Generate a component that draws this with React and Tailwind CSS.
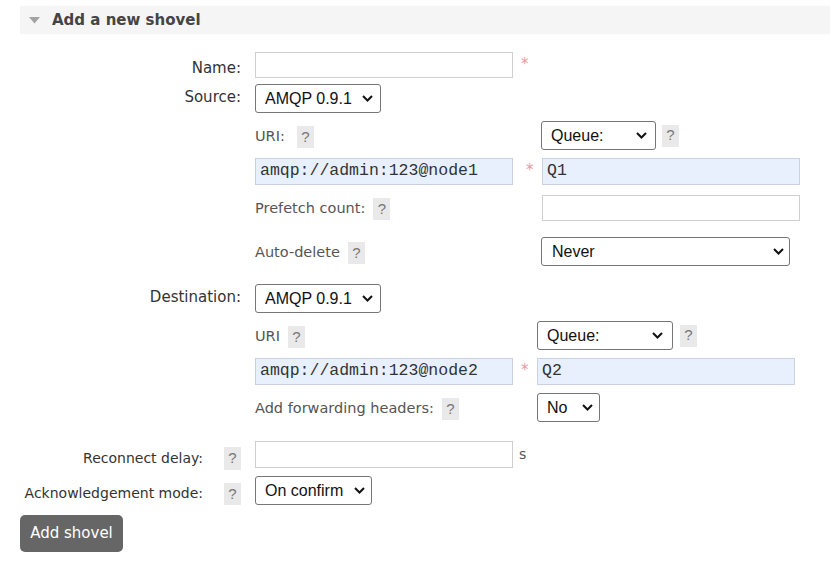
import React from "react";

const sans = "font-['DejaVu_Sans',Verdana,sans-serif]";
const arial = "font-['Liberation_Sans',Arial,sans-serif]";
const mono = "font-['Liberation_Mono','Courier_New',monospace]";

function Chevron() {
  return (
    <svg width="11" height="7" viewBox="0 0 11 7" className="shrink-0">
      <path d="M1 1 L5.5 5.5 L10 1" fill="none" stroke="#111" strokeWidth="2" />
    </svg>
  );
}

function Select({ text, w, h = "h-[29px]", pl = "pl-[9px]", pr = "pr-[8px]" }) {
  return (
    <div
      className={`${w} ${h} ${pl} ${pr} ${arial} flex items-center justify-between rounded-[3px] border border-[#767676] bg-white text-[16px] text-[#111] shrink-0`}
    >
      <span>{text}</span>
      <Chevron />
    </div>
  );
}

function Help({ cls = "" }) {
  return (
    <span
      className={`${arial} inline-flex h-[22px] w-[17px] shrink-0 items-center justify-center bg-[#e9e9e9] text-[15px] text-[#777] ${cls}`}
    >
      ?
    </span>
  );
}

function Star({ cls = "" }) {
  return <span className={`${sans} text-[15px] text-[#e39aa5] ${cls}`}>*</span>;
}

function TextInput({ w = "w-[258px]", h = "h-[27px]", value, filled }) {
  return (
    <div
      className={`${w} ${h} shrink-0 flex items-center pl-[4px] border ${
        filled ? "bg-[#e8f0fe] border-[#c9d2de]" : "bg-white border-[#cfcfcf]"
      } ${mono} text-[16.5px] text-[#333]`}
    >
      {value}
    </div>
  );
}

function SubLabel({ children }) {
  return <span className={`${sans} text-[14.5px] text-[#555]`}>{children}</span>;
}

export default function App() {
  return (
    <div className="w-[830px] h-[582px] bg-white overflow-hidden pl-[20px] pt-[6px]">
      {/* header */}
      <div className="flex h-[28px] items-center bg-[#f5f5f5] pl-[9px]">
        <svg width="11" height="7" viewBox="0 0 11 7">
          <path d="M0 0 L11 0 L5.5 6.5 Z" fill="#a3a3a3" />
        </svg>
        <span className={`${sans} ml-[12px] mt-[1px] text-[15px] font-bold text-[#444]`}>Add a new shovel</span>
      </div>

      <div className={`${sans} mt-[18px]`}>
        {/* Name */}
        <div className="flex items-start">
          <div className="w-[221px] pt-[7px] text-right text-[15px] leading-[18px] text-[#333]">Name:</div>
          <div className="ml-[14px] flex items-start">
            <TextInput h="h-[26px]" />
            <Star cls="ml-[8px] mt-[1px]" />
          </div>
        </div>

        {/* Source */}
        <div className="mt-[6px] flex items-start">
          <div className="w-[221px] pt-[4px] text-right text-[15px] leading-[18px] text-[#333]">Source:</div>
          <div className="ml-[14px]">
            <Select text="AMQP 0.9.1" w="w-[126px]" pl="pl-[9px]" pr="pr-[7px]" />
            <div className="mt-[8px]">
              <div className="flex h-[29px]">
                <div className="flex w-[286px] items-center pt-[3px]">
                  <SubLabel>URI:</SubLabel>
                  <Help cls="ml-[12px]" />
                </div>
                <div className="flex items-center">
                  <Select text="Queue:" w="w-[115px]" pl="pl-[9px]" pr="pr-[8px]" />
                  <Help cls="ml-[6px]" />
                </div>
              </div>
              <div className="mt-[8px] flex">
                <div className="flex w-[287px] items-start">
                  <TextInput value="amqp://admin:123@node1" filled />
                  <Star cls="ml-[13px] mt-[1px]" />
                </div>
                <TextInput value="Q1" filled />
              </div>
              <div className="mt-[10px] flex h-[26px]">
                <div className="flex w-[287px] items-center pt-[2px]">
                  <SubLabel>Prefetch count:</SubLabel>
                  <Help cls="ml-[8px]" />
                </div>
                <TextInput h="h-[26px]" />
              </div>
              <div className="mt-[16px] flex h-[29px]">
                <div className="flex w-[286px] items-center pt-[3px]">
                  <SubLabel>Auto-delete</SubLabel>
                  <Help cls="ml-[8px]" />
                </div>
                <Select text="Never" w="w-[249px]" pl="pl-[10px]" pr="pr-[5px]" />
              </div>
            </div>
          </div>
        </div>

        {/* Destination */}
        <div className="mt-[18px] flex items-start">
          <div className="w-[221px] pt-[4px] text-right text-[15px] leading-[18px] text-[#333]">Destination:</div>
          <div className="ml-[14px]">
            <Select text="AMQP 0.9.1" w="w-[126px]" pl="pl-[9px]" pr="pr-[7px]" />
            <div className="mt-[8px]">
              <div className="flex h-[29px]">
                <div className="flex w-[282px] items-center pt-[3px]">
                  <SubLabel>URI</SubLabel>
                  <Help cls="ml-[8px]" />
                </div>
                <div className="flex items-center">
                  <Select text="Queue:" w="w-[136px]" pl="pl-[9px]" pr="pr-[9px]" />
                  <Help cls="ml-[7px]" />
                </div>
              </div>
              <div className="mt-[8px] flex">
                <div className="flex w-[282px] items-start">
                  <TextInput value="amqp://admin:123@node2" filled />
                  <Star cls="ml-[8px] mt-[1px]" />
                </div>
                <TextInput value="Q2" filled />
              </div>
              <div className="mt-[8px] flex h-[29px]">
                <div className="flex w-[282px] items-center pt-[3px]">
                  <SubLabel>Add forwarding headers:</SubLabel>
                  <Help cls="ml-[8px]" />
                </div>
                <Select text="No" w="w-[63px]" pl="pl-[9px]" pr="pr-[6px]" />
              </div>
            </div>
          </div>
        </div>

        {/* Reconnect delay */}
        <div className="mt-[19px] flex items-start">
          <div className="flex w-[221px] items-start justify-end pt-[6px]">
            <span className="pt-[2px] text-[14px] leading-[18px] text-[#333]">Reconnect delay:</span>
            <Help cls="ml-[21px] h-[23px]" />
          </div>
          <div className="ml-[14px] flex items-center">
            <TextInput />
            <span className="ml-[6px] text-[14px] text-[#555]">s</span>
          </div>
        </div>

        {/* Acknowledgement mode */}
        <div className="mt-[6px] flex items-start">
          <div className="flex w-[221px] items-start justify-end pt-[7px]">
            <span className="pt-[1px] text-[14px] leading-[18px] text-[#333]">Acknowledgement mode:</span>
            <Help cls="ml-[21px]" />
          </div>
          <div className="ml-[14px]">
            <Select text="On confirm" w="w-[117px]" pl="pl-[9px]" pr="pr-[6px]" />
          </div>
        </div>

        <button className="mt-[10px] flex h-[37px] w-[103px] items-center justify-center rounded-[5px] bg-[#666] text-[15px] text-white">
          Add shovel
        </button>
      </div>
    </div>
  );
}
